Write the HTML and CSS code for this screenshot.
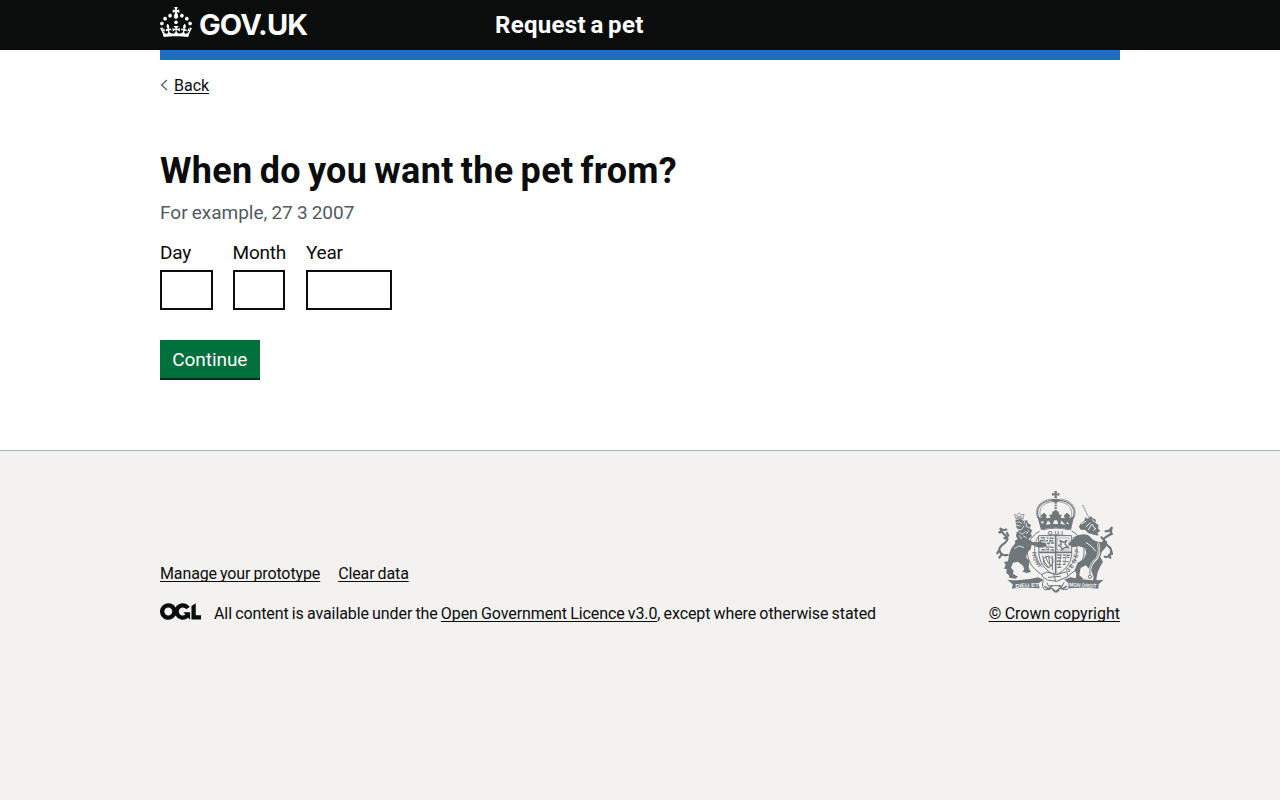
FILE: index.html
```html
<!DOCTYPE html>
<html lang="en">
<head>
<meta charset="utf-8">
<title>When do you want the pet from? – Request a pet – GOV.UK</title>
<link rel="stylesheet" href="styles.css">
</head>
<body>
<header class="header">
  <div class="container header-inner">
    <a class="logo" href="#">
      <svg class="crown" viewBox="0 0 32 30" width="32" height="30" aria-hidden="true"><path fill="currentColor" d="M22.6 10.4c-1 .4-2-.1-2.4-1-.4-.9.1-2 1-2.4.9-.4 2 .1 2.4 1s-.1 2-1 2.4m-5.9 6.7c-.9.4-2-.1-2.4-1-.4-.9.1-2 1-2.4.9-.4 2 .1 2.4 1s-.1 2-1 2.4m10.8-3.7c-1 .4-2-.1-2.4-1-.4-.9.1-2 1-2.4.9-.4 2 .1 2.4 1s0 2-1 2.4m3.3 4.8c-1 .4-2-.1-2.4-1-.4-.9.1-2 1-2.4.9-.4 2 .1 2.4 1s-.1 2-1 2.4M17 4.7l2.3 1.2V2.5l-2.3.7-.2-.2.9-3h-3.4l.9 3-.2.2c-.1.1-2.3-.7-2.3-.7v3.4L15 4.7c.1.1.1.2.2.2l-1.3 4c-.1.2-.1.4-.1.6 0 1.1.8 2 1.9 2.2h.7c1-.2 1.9-1.1 1.9-2.1 0-.2 0-.4-.1-.6l-1.3-4c-.1-.2 0-.2.1-.3m-7.6 5.7c.9.4 2-.1 2.4-1 .4-.9-.1-2-1-2.4-.9-.4-2 .1-2.4 1s0 2 1 2.4m-5 3c.9.4 2-.1 2.4-1 .4-.9-.1-2-1-2.4-.9-.4-2 .1-2.4 1s.1 2 1 2.4m-3.2 4.8c.9.4 2-.1 2.4-1 .4-.9-.1-2-1-2.4-.9-.4-2 .1-2.4 1s0 2 1 2.4m14.8 11c4.4 0 8.6.3 12.3.8 1.1-4.5 2.4-7 3.7-8.8l-2.5-.9c.2 1.3.3 1.9 0 2.7-.4-.4-.8-1.1-1.1-2.3l-1.2 4c.7-.5 1.3-.8 2-.9-1.1 2.5-2.6 3.1-3.5 3-1.1-.2-1.7-1.2-1.5-2.1.3-1.2 1.5-1.5 2.1-.1 1.1-2.3-.8-3-2-2.3 1.9-1.9 2.1-3.5.6-5.6-2.1 1.6-2.1 3.2-1.2 5.5-1.2-1.4-3.2-.6-2.5 1.6.9-1.4 2.1-.5 1.9.8-.2 1.1-1.7 2.1-3.5 1.9-2.7-.2-2.9-2.1-2.9-3.6.7-.1 1.9.5 2.9 1.9l.4-4.3c-1.1 1.1-2.1 1.4-3.2 1.4.4-1.2 2.1-3 2.1-3h-5.4s1.7 1.9 2.1 3c-1.1 0-2.1-.2-3.2-1.4l.4 4.3c1-1.4 2.2-2 2.9-1.9-.1 1.5-.2 3.4-2.9 3.6-1.9.2-3.4-.8-3.5-1.9-.2-1.3 1-2.2 1.9-.8.7-2.3-1.2-3-2.5-1.6.9-2.2.9-3.9-1.2-5.5-1.5 2-1.3 3.7.6 5.6-1.2-.7-3.1 0-2 2.3.6-1.4 1.8-1.1 2.1.1.2.9-.3 1.9-1.5 2.1-.9.2-2.4-.5-3.5-3 .6 0 1.2.3 2 .9l-1.2-4c-.3 1.1-.7 1.9-1.1 2.3-.3-.8-.2-1.4 0-2.7l-2.9.9C1.3 23 2.6 25.5 3.7 30c3.7-.5 7.9-.8 12.3-.8"/></svg>
      <span class="logo-text">GOV.UK</span>
    </a>
    <a class="service" href="#">Request a pet</a>
  </div>
</header>
<div class="container">
  <div class="blue-bar"></div>
  <a class="back" href="#">
    <svg class="chevron" viewBox="0 0 8 12" width="8" height="12" aria-hidden="true"><path d="M7 1 1.6 6 7 11" fill="none" stroke="#505a5f" stroke-width="1.2"/></svg>
    <span class="link back-text">Back</span>
  </a>
  <main class="main">
    <h1 class="title">When do you want the pet from?</h1>
    <p class="hint">For example, 27 3 2007</p>
    <form class="form">
      <div class="date">
        <label class="field field-day"><span class="label">Day</span><input class="input input-day" type="text"></label>
        <label class="field field-month"><span class="label">Month</span><input class="input" type="text"></label>
        <label class="field field-year"><span class="label">Year</span><input class="input input-year" type="text"></label>
      </div>
      <button class="button" type="button">Continue</button>
    </form>
  </main>
</div>
<footer class="footer">
  <div class="container footer-inner">
    <div class="footer-main">
      <nav class="footer-nav"><a class="link manage" href="#">Manage your prototype</a><a class="link clear" href="#">Clear data</a></nav>
      <div class="licence">
        <svg class="ogl" viewBox="0 0 483.2 195.7" width="41" height="17" aria-hidden="true"><path fill="currentColor" d="M421.5 142.8V.1l-50.7 32.3v161.1h112.4v-50.7zm-122.3-9.6A47.12 47.12 0 0 1 221 97.8c0-26 21.1-47.1 47.1-47.1 16.7 0 31.4 8.7 39.7 21.8l42.7-27.2A97.63 97.63 0 0 0 268.1 0c-36.5 0-68.3 20.1-85.1 49.7A98 98 0 0 0 97.8 0C43.9 0 0 43.9 0 97.8s43.9 97.8 97.8 97.8c36.5 0 68.3-20.1 85.1-49.7a97.76 97.76 0 0 0 149.6 25.4l19.4 22.2h3v-87.8h-80l24.3 27.5zM97.8 145c-26 0-47.1-21.1-47.1-47.1s21.1-47.1 47.1-47.1 47.1 21.1 47.1 47.1S123.8 145 97.8 145"/></svg>
        <span class="licence-text">All content is available under the <a class="link licence-link" href="#">Open Government Licence v3.0</a>, except where otherwise stated</span>
      </div>
    </div>
    <div class="copyright">
      <svg class="arms" viewBox="48 33 351 309" width="117" height="103" aria-hidden="true">
        <g fill="none" stroke="#6f777b" stroke-linecap="round" stroke-linejoin="round">
          <!-- crown -->
          <path fill="#6f777b" stroke="none" d="M223 33h8l-1 8 8-3v10l-8-3 1 10h-8l1-10-8 3V38l8 3zM214 57h25l-4 9h-17z"/>
          <path stroke-width="4" stroke-dasharray="4 4" d="M178 117c-16-30 6-56 43-56M277 117c16-30-6-56-43-56"/>
          <path stroke-width="2" d="M183 113c-12-26 8-47 38-48M272 113c12-26-8-47-38-48M173 114c-13-29 8-55 42-57M282 114c13-29-8-55-42-57"/>
          <path stroke-width="7" stroke-dasharray="5 3" stroke-linecap="butt" d="M227 66v38"/>
          <path fill="#6f777b" fill-rule="evenodd" stroke="none" d="M172 109l13 6-2-9 9-8 8 8-2 9 14-2-5-9h8l3-10h17l3 10h8l-5 9 13 2-2-9 9-8 9 8-2 9 14-6-9 41q-48-14-90 0zM184 123v9l9-6zm20-2-6 13 15-2zm19 0-4 11h16l-4-11zm20 0-1 11 14 2zm18 3-1 7 7 2z"/>
          <!-- garter and shield -->
          <path stroke-width="3" d="M178 154c-46 24-48 86-7 119q26 24 56 29 30-5 56-29c41-33 39-95-7-119"/>
          <path stroke-width="2.5" d="M190 149q36-9 76 0M188 167q39-6 79 0M173 172c-16 30-12 65 13 90M281 172c17 30 13 65-14 90"/>
          <path fill="#f3f2f1" stroke-width="3" d="M177 167h98v57q-3 40-49 62-44-20-49-60z"/>
          <path stroke-width="5" d="M227 167v113M178 217h96"/>
          <path stroke-width="4" stroke-dasharray="12 5 7 4" stroke-linecap="butt" d="M182 173l40 2M180 181l42 2M184 191l38-2M181 200l42 2M184 209l38 1M232 225l38 1M232 234l36-2M231 243l34 2M231 253h26M232 262h14"/>
          <path stroke-width="2" d="M192 172l8 38M211 172l-6 38M243 224l-5 36M258 224l-3 30"/>
          <path stroke-width="4" d="M240 181l10 6 10-6-5 11 10 11-11-1-8 8-3-10-7-4 8-2z"/>
          <path stroke-width="3" d="M188 228q3 22 20 36M197 228q3 20 18 30M206 228l4 29M217 228v42M190 236q16-16 29 3 1 20-15 24-16-10-14-27"/>
          <path stroke-width="1.5" d="M233 174h34v36h-34z"/>
          <!-- lion -->
          <path stroke-width="2" d="M106 113l-3-10 8 3 6-8 6 7 9-2-3 11zM108 117h22M111 108l13 5M124 108l-13 5"/>
          <path fill="#6f777b" stroke="none" d="M106 121l15-4 9 5 11-1 4 9 8 5-4 9 8 8-5 8 4 9-11 9 13 8 16 1 8-5 6 6 8 1 5 7-8 5-16 2-22-9-3 13-11 13-3 12 10 11-2 21 7 12-13 3-12-4 5-8-4-10-15-12-15 3-6 15 8 9-2 9 15 9-8 6-18-3-2-9-7-4 1-13-8-1 5-11-5-8 12-4 4-22 5-15 13-17-2-7 9-4-5-10 2-11 7-5-7-8z"/>
          <path stroke="#f3f2f1" stroke-width="2.5" d="M111 127l8-1 7 5M110 135l10 3M110 147l13 3 9-12M118 157l8 6 12-9M140 130l-2 9 9 5M146 152l-6 9M130 168l9 5M119 167l5 9M133 123v7M104 205l13-7 14 4"/>
          <path stroke-width="6.5" d="M83 225c-16 3-23-7-25-16-2-12 22-19 24-31 1-9-11-15-17-23l-4-9 8 4 10-1M58 209l-6 11M65 223l-7 10M66 155l-8 2M83 177l-10-3M81 159l4 8"/>
          <!-- unicorn -->
          <path stroke-width="3" stroke-dasharray="5 2" stroke-linecap="butt" d="M308 75l19 39"/>
          <path fill="#6f777b" stroke="none" d="M314 112l10 4 9-8 4 6 11 5-2 9 10 8-2 9 7 9-9 4 4 9-14-3-18-5-8-9-14-1-5-9 4-9 11-8 3-7zM286 169q33-14 47 4 13 14 32 13l9-7 8 6-4 16-13 15-4 15 8 15-8 13-8 18-4 21 7 8-5 7-14-3 4-19-7-17-17-18-15 8-4 22 12 10-9 6-14-5 2-16-5-11 9-22 18-11 8-18-4-15-19-5-17 3-15-9z"/>
          <path stroke="#f3f2f1" stroke-width="3" d="M304 132l14-8M318 140l12-11M325 149l11-17 9 14M337 119l6 7M341 151l6-5M319 188q15 7 28 25"/>
          <path stroke-width="6.5" d="M374 230c15 5 21-11 19-21-1-10-22-17-22-29 0-10 17-10 21-20l3-17-7 9-11 2M393 210l3 12M382 168l14-7M372 180l-8-8M387 225l4 8"/>
          <path stroke="#f3f2f1" stroke-width="7" d="M355 191q8 36-13 53-14 16-12 38"/>
          <path stroke-width="3" stroke-dasharray="4 3" d="M354 190q9 34-12 53-14 16-12 40"/>
          <circle cx="330" cy="290" r="5" stroke-width="3"/>
          <!-- motto scroll -->
          <path fill="#f3f2f1" stroke-width="3" d="M187 282l14-6 28 8 31-9 5 14-35 15-27-4-15-10z"/>
          <path stroke-width="3" d="M205 292l36-3M220 279l7 25M190 303q-8 16 5 27l24-5 8 10 9-10 25 4q13-10 1-25M201 309l8 15M252 308l-8 15M210 317h34"/>
          <path stroke-width="5" d="M195 320l12 8 8-10M238 318l10 9 11-8M219 330l9 6 9-6"/>
          <path fill="#6f777b" stroke="none" d="M82 299q48 6 92-7l18 7-17 11 4 15q-40-4-83 1l2-13zM371 299q-52 6-100-7l-19 7 17 11-4 15q44-4 90 1l1-13z"/>
        </g>
        <g class="motto">
          <text x="106" y="322" textLength="70" lengthAdjust="spacingAndGlyphs" transform="rotate(-3 140 316)">DIEU ET</text>
          <text x="268" y="322" textLength="82" lengthAdjust="spacingAndGlyphs" transform="rotate(3 310 316)">MON DROIT</text>
        </g>
        <g class="garter">
          <text x="203" y="164" textLength="46" lengthAdjust="spacing">QUI</text>
          <text transform="translate(156 216) rotate(82)">H</text>
          <text transform="translate(158 231) rotate(70)">O</text>
          <text transform="translate(164 246) rotate(58)">N</text>
          <text transform="translate(173 259) rotate(45)">I</text>
          <text transform="translate(263 278) rotate(-38)">S</text>
          <text transform="translate(275 267) rotate(-50)">E</text>
          <text transform="translate(285 251) rotate(-62)">N</text>
          <text transform="translate(292 235) rotate(-74)">E</text>
          <text transform="translate(296 219) rotate(-84)">P</text>
        </g>
      </svg>
      <a class="link crown-link" href="#">© Crown copyright</a>
    </div>
  </div>
</footer>
</body>
</html>
```
FILE: styles.css
```css
* { box-sizing: border-box; }
html { background: #f3f2f1; }
body { margin: 0; background: #fff; color: #0b0c0c; font-family: Roboto, "Noto Sans", sans-serif; font-size: 16px; line-height: 20px; }
.container { width: 960px; margin: 0 auto; }
.header { height: 50px; background: #0b0c0c; color: #fff; }
.header-inner { display: flex; }
.header a { color: #fff; text-decoration: none; }
.logo { display: flex; width: 335px; padding-top: 7px; gap: 7px; }
.crown { display: block; }
.logo-text { font: 700 29px/36px Inter, sans-serif; letter-spacing: -0.9px; }
.service { padding-top: 10px; font-size: 24px; line-height: 30px; font-weight: 700; letter-spacing: 0.3px; word-spacing: -1.7px; }
.blue-bar { height: 10px; background: #1d70b8; }
.link { color: #0b0c0c; text-decoration: underline; text-decoration-thickness: 1px; text-underline-offset: 2px; text-decoration-skip-ink: none; }
.back { display: flex; width: max-content; margin-top: 15px; gap: 6px; color: #0b0c0c; text-decoration: none; }
.back-text { line-height: 21px; }
.chevron { margin-top: 4px; }
.main { padding: 55px 0 70px; }
.title { margin: 0; font-size: 36px; line-height: 40px; font-weight: 700; letter-spacing: 0.3px; word-spacing: -2.1px; }
.hint { margin: 9px 0 15px; color: #505a5f; font-size: 19px; line-height: 25px; word-spacing: -0.6px; }
.date { display: flex; }
.field { display: block; }
.field-day { width: 72.5px; }
.field-month { width: 73.5px; }
.label { display: block; margin-bottom: 5px; font-size: 19px; line-height: 25px; letter-spacing: -0.2px; }
.input { display: block; width: 52.3px; height: 40px; border: 2px solid #0b0c0c; border-radius: 0; background: #fff; }
.input-day { width: 52.6px; }
.input-year { width: 85.5px; }
.button { display: block; width: 99.6px; height: 38px; margin: 30px 0 2px; padding: 0; border: 0; background: #00703c; color: #fff; box-shadow: 0 2px 0 #002d18; font: 19px/40px Roboto, sans-serif; letter-spacing: -0.05px; }
.footer { height: 350px; padding-top: 40px; border-top: 1px solid #b1b4b6; background: #f3f2f1; }
.footer-inner { display: flex; justify-content: space-between; align-items: flex-end; }
.footer-nav { display: flex; gap: 18px; margin-bottom: 20px; letter-spacing: -0.12px; word-spacing: -0.8px; }
.licence { display: flex; gap: 13px; letter-spacing: -0.09px; word-spacing: -0.7px; }
.ogl { margin-top: -1px; }
.copyright { display: flex; flex-direction: column; align-items: flex-end; }
.crown-link { word-spacing: -0.6px; }
.arms { margin: 0 7px 10px 0; }
.motto { fill: #f3f2f1; font: bold 17px "Liberation Sans", sans-serif; }
.garter { fill: #6f777b; font: bold 18px "Liberation Sans", sans-serif; }
```
